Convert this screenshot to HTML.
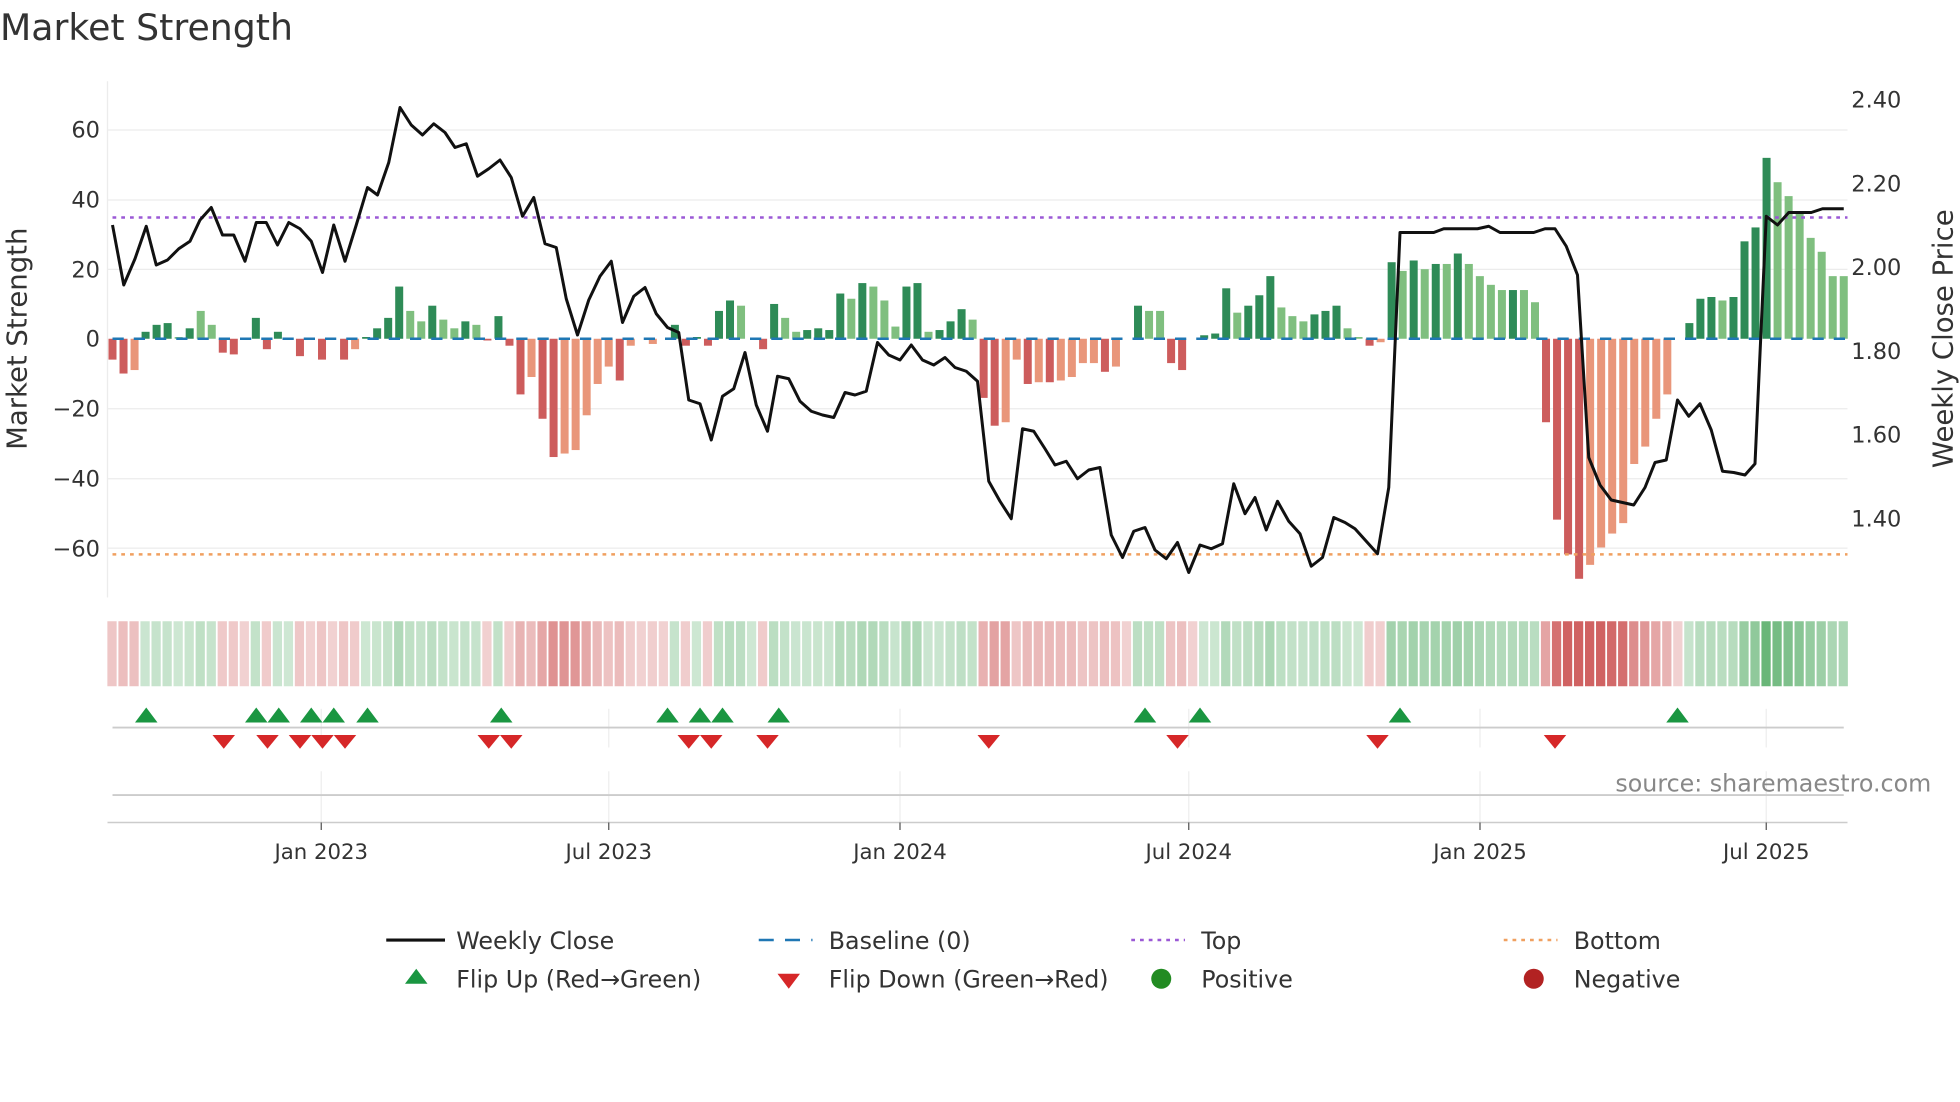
<!DOCTYPE html>
<html><head><meta charset="utf-8"><style>
html,body{margin:0;padding:0;background:#fff;}
svg{display:block;font-family:"DejaVu Sans","Liberation Sans",sans-serif;}
</style></head><body>
<svg id="s" width="1960" height="1102" viewBox="0 0 1568 881.6" xmlns="http://www.w3.org/2000/svg">
<rect width="1568" height="882" fill="#fff"/>
<text x="0" y="32" font-size="29" fill="#333">Market Strength</text>
<g stroke="#ececec" stroke-width="1">
<line x1="86" x2="1478" y1="104" y2="104"/><line x1="86" x2="1478" y1="160" y2="160"/>
<line x1="86" x2="1478" y1="215.5" y2="215.5"/><line x1="86" x2="1478" y1="327" y2="327"/>
<line x1="86" x2="1478" y1="383" y2="383"/><line x1="86" x2="1478" y1="438.5" y2="438.5"/>
<line x1="86" x2="86" y1="65" y2="478"/>
</g>
<g font-size="18" fill="#333" text-anchor="end">
<text x="80" y="110">60</text><text x="80" y="166">40</text><text x="80" y="222">20</text>
<text x="80" y="277">0</text><text x="80" y="333">−20</text><text x="80" y="389">−40</text><text x="80" y="445">−60</text>
</g>
<g font-size="18" fill="#333">
<text x="1481" y="86">2.40</text><text x="1481" y="153">2.20</text><text x="1481" y="220">2.00</text>
<text x="1481" y="287">1.80</text><text x="1481" y="354">1.60</text><text x="1481" y="421">1.40</text>
</g>
<text transform="translate(21,271) rotate(-90)" font-size="22" fill="#333" text-anchor="middle">Market Strength</text>
<text transform="translate(1562,271) rotate(-90)" font-size="22" fill="#333" text-anchor="middle">Weekly Close Price</text>
<g id="bars"></g>
<line x1="90" x2="1478" y1="271" y2="271" stroke="#1f77b4" stroke-width="2" stroke-dasharray="9,8"/>
<line x1="90" x2="1478" y1="174" y2="174" stroke="#9b59d6" stroke-width="2" stroke-dasharray="3,4"/>
<line x1="90" x2="1478" y1="443.5" y2="443.5" stroke="#f0a060" stroke-width="2" stroke-dasharray="3,4"/>
<polyline id="price" fill="none" stroke="#111" stroke-width="2.4" stroke-linejoin="round"/>
<g id="strip"></g>
<g stroke="#eee"><line x1="257" x2="257" y1="567" y2="598"/><line x1="487" x2="487" y1="567" y2="598"/><line x1="720" x2="720" y1="567" y2="598"/><line x1="951" x2="951" y1="567" y2="598"/><line x1="1184" x2="1184" y1="567" y2="598"/><line x1="1413" x2="1413" y1="567" y2="598"/>
<line x1="257" x2="257" y1="617" y2="658"/><line x1="487" x2="487" y1="617" y2="658"/><line x1="720" x2="720" y1="617" y2="658"/><line x1="951" x2="951" y1="617" y2="658"/><line x1="1184" x2="1184" y1="617" y2="658"/><line x1="1413" x2="1413" y1="617" y2="658"/></g>
<line x1="90" x2="1475" y1="582" y2="582" stroke="#ccc" stroke-width="1.5"/>
<line x1="90" x2="1475" y1="636" y2="636" stroke="#ccc" stroke-width="1.5"/>
<line x1="86" x2="1478" y1="658" y2="658" stroke="#ccc" stroke-width="1.2"/>
<g stroke="#555"><line x1="257" x2="257" y1="658" y2="664"/><line x1="487" x2="487" y1="658" y2="664"/><line x1="720" x2="720" y1="658" y2="664"/><line x1="951" x2="951" y1="658" y2="664"/><line x1="1184" x2="1184" y1="658" y2="664"/><line x1="1413" x2="1413" y1="658" y2="664"/></g>
<g id="marks"></g>
<g font-size="17" fill="#333" text-anchor="middle">
<text x="257" y="687">Jan 2023</text><text x="487" y="687">Jul 2023</text><text x="720" y="687">Jan 2024</text>
<text x="951" y="687">Jul 2024</text><text x="1184" y="687">Jan 2025</text><text x="1413" y="687">Jul 2025</text>
</g>
<text x="1545" y="633" font-size="19" fill="#888" text-anchor="end">source: sharemaestro.com</text>
<g font-size="19" fill="#333">
<line x1="309" x2="356" y1="752" y2="752" stroke="#111" stroke-width="2.5"/><text x="365" y="759">Weekly Close</text>
<line x1="607" x2="650" y1="752" y2="752" stroke="#1f77b4" stroke-width="2" stroke-dasharray="12,9"/><text x="663" y="759">Baseline (0)</text>
<line x1="905" x2="948" y1="752" y2="752" stroke="#9b59d6" stroke-width="2" stroke-dasharray="3,4"/><text x="961" y="759">Top</text>
<line x1="1203" x2="1246" y1="752" y2="752" stroke="#f0a060" stroke-width="2" stroke-dasharray="3,4"/><text x="1259" y="759">Bottom</text>
<polygon points="324,787 342,787 333,775" fill="#1a9641"/><text x="365" y="790">Flip Up (Red→Green)</text>
<polygon points="622,779 640,779 631,791" fill="#d62728"/><text x="663" y="790">Flip Down (Green→Red)</text>
<circle cx="929" cy="783" r="8" fill="#228b22"/><text x="961" y="790">Positive</text>
<circle cx="1227" cy="783" r="8" fill="#b22222"/><text x="1259" y="790">Negative</text>
</g>
</svg>
<script>
var NS="http://www.w3.org/2000/svg";
function el(t,a,p){var e=document.createElementNS(NS,t);for(var k in a)e.setAttribute(k,a[k]);p.appendChild(e);return e;}
var V=[[-6,1],[-10,1],[-9,0],[2,1],[4,1],[4.5,1],[0.5,0],[3,1],[8,0],[4,0],[-4,1],[-4.5,1],[0,1],[6,1],[-3,1],[2,1],[0,1],[-5,1],[0,1],[-6,1],[0,1],[-6,1],[-3,0],[0.5,1],[3,1],[6,1],[15,1],[8,0],[5,0],[9.5,1],[5.5,0],[3,0],[5,1],[4,0],[-0.5,1],[6.5,1],[-2,1],[-16,1],[-11,0],[-23,1],[-34,1],[-33,0],[-32,0],[-22,0],[-13,0],[-8,0],[-12,1],[-2,0],[0,1],[-1.5,0],[0,1],[4,1],[-2,1],[0.5,1],[-2,1],[8,1],[11,1],[9.5,0],[0,1],[-3,1],[10,1],[6,0],[2,0],[2.5,1],[3,1],[2.5,1],[13,1],[11.5,0],[16,1],[15,0],[11,0],[3.5,0],[15,1],[16,1],[2,0],[2.5,1],[5,1],[8.5,1],[5.5,0],[-17,1],[-25,1],[-24,0],[-6,0],[-13,1],[-12.5,0],[-12.5,1],[-12,0],[-11,0],[-7,0],[-7,0],[-9.5,1],[-8,0],[0,1],[9.5,1],[8,0],[8,0],[-7,1],[-9,1],[0,1],[1,1],[1.5,1],[14.5,1],[7.5,0],[9.5,1],[12.5,1],[18,1],[9,0],[6.5,0],[5,0],[7,1],[8,1],[9.5,1],[3,0],[0.5,0],[-2,1],[-1,0],[22,1],[19.5,0],[22.5,1],[20,0],[21.5,1],[21.5,0],[24.5,1],[21.5,0],[18,0],[15.5,0],[14,0],[14,1],[14,0],[10.5,0],[-24,1],[-52,1],[-62,1],[-69,1],[-65,0],[-60,0],[-56,0],[-53,0],[-36,0],[-31,0],[-23,0],[-16,0],[0,1],[4.5,1],[11.5,1],[12,1],[11,0],[12,1],[28,1],[32,1],[52,1],[45,0],[41,0],[36,0],[29,0],[25,0],[18,0],[18,0]];
var bars=document.getElementById("bars"),strip=document.getElementById("strip");
var n=V.length,x0=90,dx=(1475-90)/(n-1),last=1;
for(var i=0;i<n;i++){var v=V[i][0],d=V[i][1],x=x0+i*dx,h=v*2.783;
 var c=v>=0?(d?"#2e8b57":"#7fbf7f"):(d?"#cd5c5c":"#e9967a");
 if(v!==0)el("rect",{x:x-3.2,y:v>0?271-h:271,width:6.4,height:Math.abs(h),fill:c},bars);
 if(v>0)last=1;else if(v<0)last=-1;
 var a=Math.min(0.85,0.25+Math.abs(v)/60*0.6);
 el("rect",{x:x-4.1,y:497,width:7.4,height:52,fill:last>0?"rgba(60,160,80,"+a+")":"rgba(200,70,70,"+a+")"},strip);}
var P=[[90,180],[99,228],[108,207],[117,181],[125,212],[134,208],[143,199],[152,193],[160,176],[169,166],[178,188],[187,188],[196,209],[205,178],[213,178],[222,196],[231,178],[240,183],[249,193],[258,218],[267,180],[276,209],[285,180],[294,150],[302,156],[311,130],[320,86],[329,100],[338,108],[347,99],[356,106],[364,118],[373,115],[382,141],[391,135],[400,128],[409,142],[418,173],[427,158],[436,195],[445,198],[453,239],[462,268],[471,240],[480,221],[489,209],[498,258],[507,237],[516,230],[525,251],[534,262],[543,266],[551,320],[560,323],[569,352],[578,317],[587,311],[596,282],[605,324],[614,345],[622,301],[631,303],[640,321],[649,329],[658,332],[667,334],[676,314],[684,316],[693,313],[702,274],[711,284],[720,288],[729,276],[738,288],[747,292],[756,286],[764,294],[773,297],[782,305],[791,385],[800,401],[809,415],[818,343],[827,345],[836,359],[844,372],[853,369],[862,383],[871,376],[880,374],[889,428],[898,446],[907,425],[916,422],[924,440],[933,447],[942,434],[951,458],[960,436],[969,439],[978,435],[987,387],[996,411],[1004,398],[1013,424],[1022,401],[1031,417],[1040,427],[1049,453],[1058,446],[1067,414],[1076,418],[1084,423],[1093,433],[1102,443],[1111,390],[1120,186],[1129,186],[1138,186],[1147,186],[1155,183],[1164,183],[1173,183],[1182,183],[1191,181],[1200,186],[1209,186],[1218,186],[1227,186],[1236,183],[1244,183],[1253,197],[1262,220],[1271,366],[1280,388],[1289,400],[1298,402],[1307,404],[1316,390],[1324,370],[1333,368],[1342,320],[1351,333],[1360,323],[1369,344],[1378,377],[1387,378],[1396,380],[1404,371],[1413,173],[1422,180],[1431,170],[1440,170],[1449,170],[1458,167],[1467,167],[1475,167]];
document.getElementById("price").setAttribute("points",P.map(function(p){return p.join(",")}).join(" "));
var m=document.getElementById("marks");
[117,205,223,249,267,294,401,534,560,578,623,916,960,1120,1342].forEach(function(x){el("polygon",{points:(x-9)+",578 "+(x+9)+",578 "+x+",566",fill:"#1a9641"},m);});
[179,214,240,258,276,391,409,551,569,614,791,942,1102,1244].forEach(function(x){el("polygon",{points:(x-9)+",588 "+(x+9)+",588 "+x+",599",fill:"#d62728"},m);});
</script>
</body></html>
